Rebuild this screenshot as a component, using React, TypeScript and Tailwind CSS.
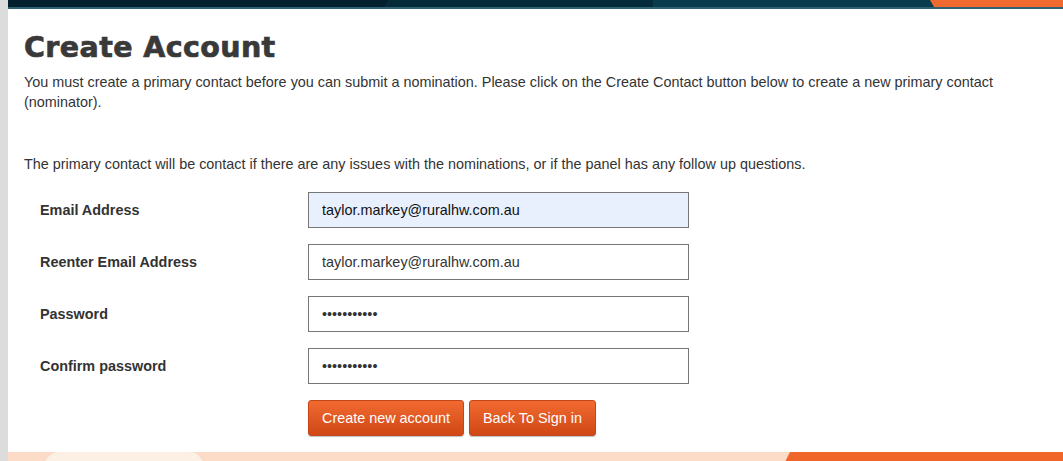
const rows = [
  { label: 'Email Address', value: 'taylor.markey@ruralhw.com.au', type: 'text', filled: true },
  { label: 'Reenter Email Address', value: 'taylor.markey@ruralhw.com.au', type: 'text', filled: false },
  { label: 'Password', value: 'abcdefghijk', type: 'password', filled: false },
  { label: 'Confirm password', value: 'abcdefghijk', type: 'password', filled: false },
];

const HeaderBand = () => (
  <svg className="block h-[9px] w-full shrink-0" viewBox="0 0 1055 9" preserveAspectRatio="none">
    <rect x="0" y="0" width="1055" height="9" fill="#04212f" />
    <polygon points="0,0 380,0 376,7 0,7" fill="#03202e" />
    <polygon points="380,0 645,0 645,7 376,7" fill="#052a3a" />
    <polygon points="645,0 930,0 934,7 645,7" fill="#083b4b" />
    <polygon points="922,0 1055,0 1055,7 926,7" fill="#f0692e" />
    <rect x="0" y="7" width="1055" height="2" fill="#2f6172" />
  </svg>
);

const FooterBand = () => (
  <svg className="block h-[12px] w-full shrink-0" viewBox="0 0 1055 12" preserveAspectRatio="none">
    <rect x="0" y="0" width="1055" height="12" fill="#fcdcc7" />
    <path d="M36 12 C40 4 44 0 52 0 L182 0 C188 0 192 4 196 12 Z" fill="#fcefe4" />
    <polygon points="782,0 1055,0 1055,12 776,12" fill="#f0652a" />
  </svg>
);

const btn =
  'h-9 rounded-[3px] border border-[#c4461a] bg-gradient-to-b from-[#f26a30] to-[#cf4815] px-[13px] text-white shadow-[0_1px_1px_rgba(0,0,0,0.25)]';

export default function App() {
  return (
    <div className="flex h-screen overflow-hidden bg-white" style={{ fontFamily: '"Liberation Sans", Arial, sans-serif' }}>
      <div className="w-2 shrink-0 bg-[#dcdcdc]" />
      <div className="flex min-w-0 flex-1 flex-col">
        <HeaderBand />

        <main className="shrink-0 px-4 pt-[22px] text-[14.4px] leading-5 text-[#333]">
          <h1
            className="text-[28.5px] font-bold leading-[34px] tracking-[0.4px] text-[#393939] [-webkit-text-stroke:0.7px_#393939]"
            style={{ fontFamily: '"DejaVu Sans", "Liberation Sans", sans-serif' }}
          >
            Create Account
          </h1>
          <p className="mt-[7px] pr-6">
            You must create a primary contact before you can submit a nomination. Please click on the Create Contact
            button below to create a new primary contact (nominator).
          </p>
          <p className="mt-[42px]">
            The primary contact will be contact if there are any issues with the nominations, or if the panel has any
            follow up questions.
          </p>

          <form className="mt-[18px] flex flex-col gap-4 pl-4">
            {rows.map((r) => (
              <div key={r.label} className="flex items-center">
                <label className="w-[268px] shrink-0 font-bold text-[#333]">{r.label}</label>
                <input
                  readOnly
                  type={r.type}
                  value={r.value}
                  className={`h-9 w-[381px] border border-[#767676] px-[13px] text-[14.4px] outline-none ${
                    r.filled ? 'bg-[#e8f0fe] text-[#111]' : 'bg-white text-[#333]'
                  }`}
                  style={{ fontFamily: '"Liberation Sans", Arial, sans-serif' }}
                />
              </div>
            ))}
            <div className="flex gap-[5px] pl-[268px]">
              <button type="button" className={btn}>
                Create new account
              </button>
              <button type="button" className={btn}>
                Back To Sign in
              </button>
            </div>
          </form>
        </main>

        <div className="mt-4 shrink-0">
          <FooterBand />
        </div>
      </div>
    </div>
  );
}
